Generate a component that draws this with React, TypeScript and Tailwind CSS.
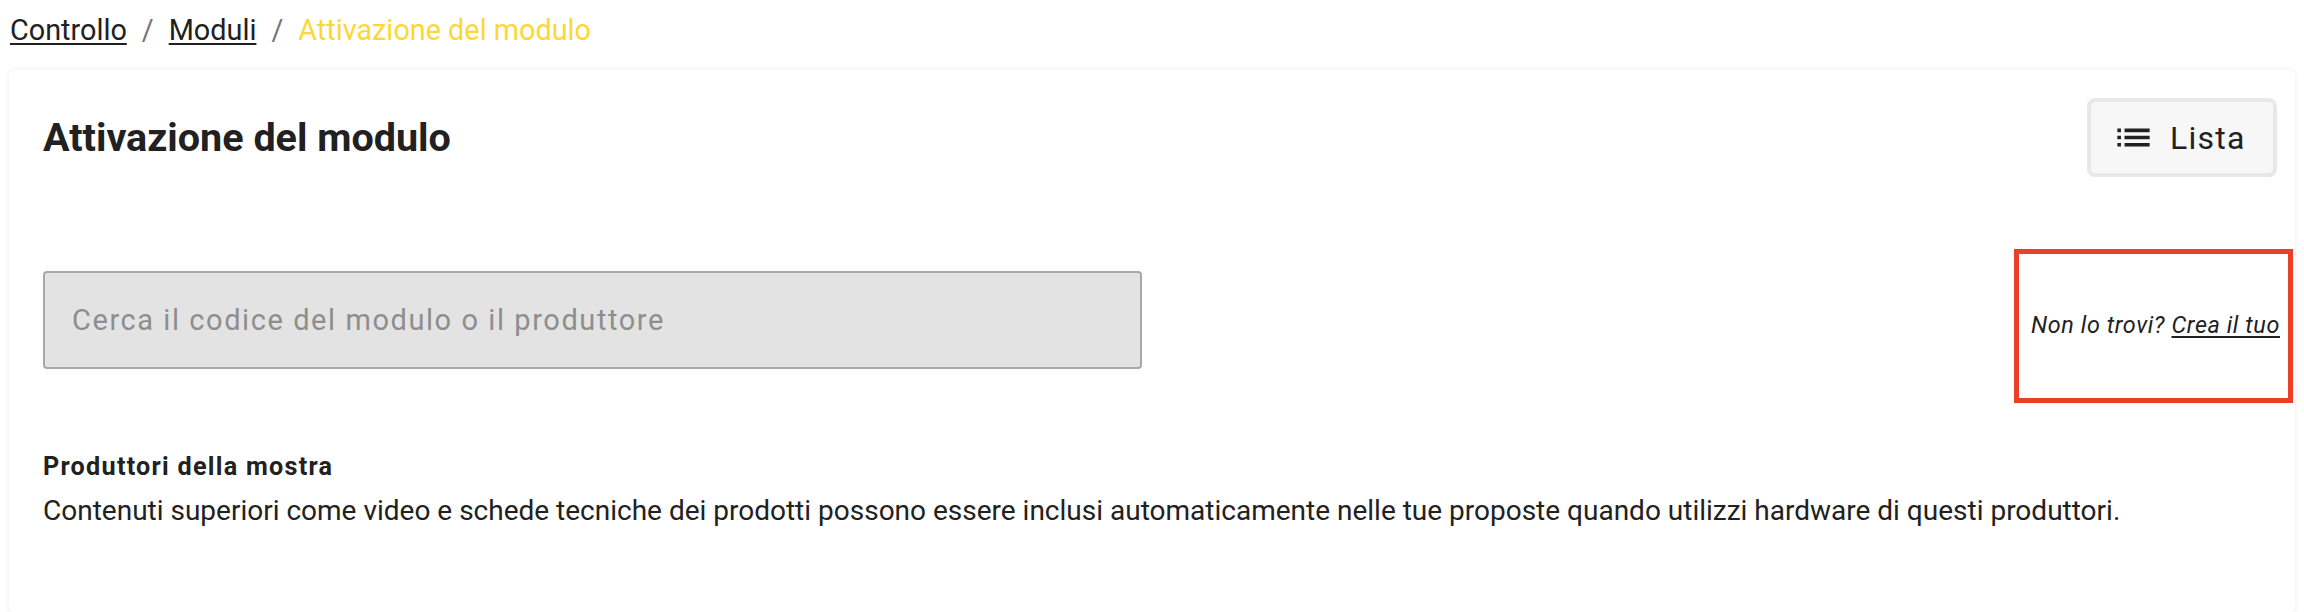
import React from "react";
import { MdList } from "react-icons/md";

export default function App() {
  return (
    <div className="min-h-screen bg-white font-['Roboto',sans-serif] text-[#212121]">
      <nav className="flex h-[70px] items-start pl-[10px] pt-[9px] text-[28.8px] leading-[43px]">
        <a href="#" className="underline decoration-2 underline-offset-[3px]">Controllo</a>
        <span className="mx-[15px] text-[#757575]">/</span>
        <a href="#" className="underline decoration-2 underline-offset-[3px]">Moduli</a>
        <span className="mx-[15px] text-[#757575]">/</span>
        <span className="text-[#fdd835]">Attivazione del modulo</span>
      </nav>

      <section className="mx-[9px] rounded-[6px] bg-white pb-[80px] pl-[34px] pr-[18px] pt-[28px] shadow-[0_0_6px_rgba(0,0,0,0.08)]">
        <div className="flex items-center justify-between">
          <h1 className="text-[39.5px] font-bold leading-none">Attivazione del modulo</h1>
          <button className="flex h-[79px] w-[190px] items-center gap-[15px] rounded-[8px] border-4 border-[#e8e8e8] bg-[#f7f7f7] pl-[21px] text-[32px] tracking-[0.04em] text-[#212121]">
            <MdList size={43} />
            Lista
          </button>
        </div>

        <div className="mt-[72px] flex items-start justify-between">
          <input
            type="text"
            placeholder="Cerca il codice del modulo o il produttore"
            className="mt-[22px] h-[98px] w-[1099px] rounded-[4px] border-2 border-[#a9a9a9] bg-[#e3e3e3] px-[27px] text-[29px] tracking-[0.054em] outline-none placeholder:text-[#8e8e8e]"
          />
          <div className="-mr-[16px] flex h-[154px] w-[279px] items-center justify-center border-[5px] border-[#ea4027]">
            <p className="pl-[4px] text-[23.4px] italic tracking-[0.025em]">
              Non lo trovi?{" "}
              <a href="#" className="underline underline-offset-[3px]">
                Crea il tuo
              </a>
            </p>
          </div>
        </div>

        <h2 className="mt-[45px] text-[25.2px] font-bold leading-[1.5] tracking-[0.05em]">Produttori della mostra</h2>
        <p className="mt-[3px] text-[28px] leading-[1.54]">
          Contenuti superiori come video e schede tecniche dei prodotti possono essere inclusi automaticamente nelle tue proposte quando utilizzi hardware di questi produttori.
        </p>
      </section>
    </div>
  );
}
